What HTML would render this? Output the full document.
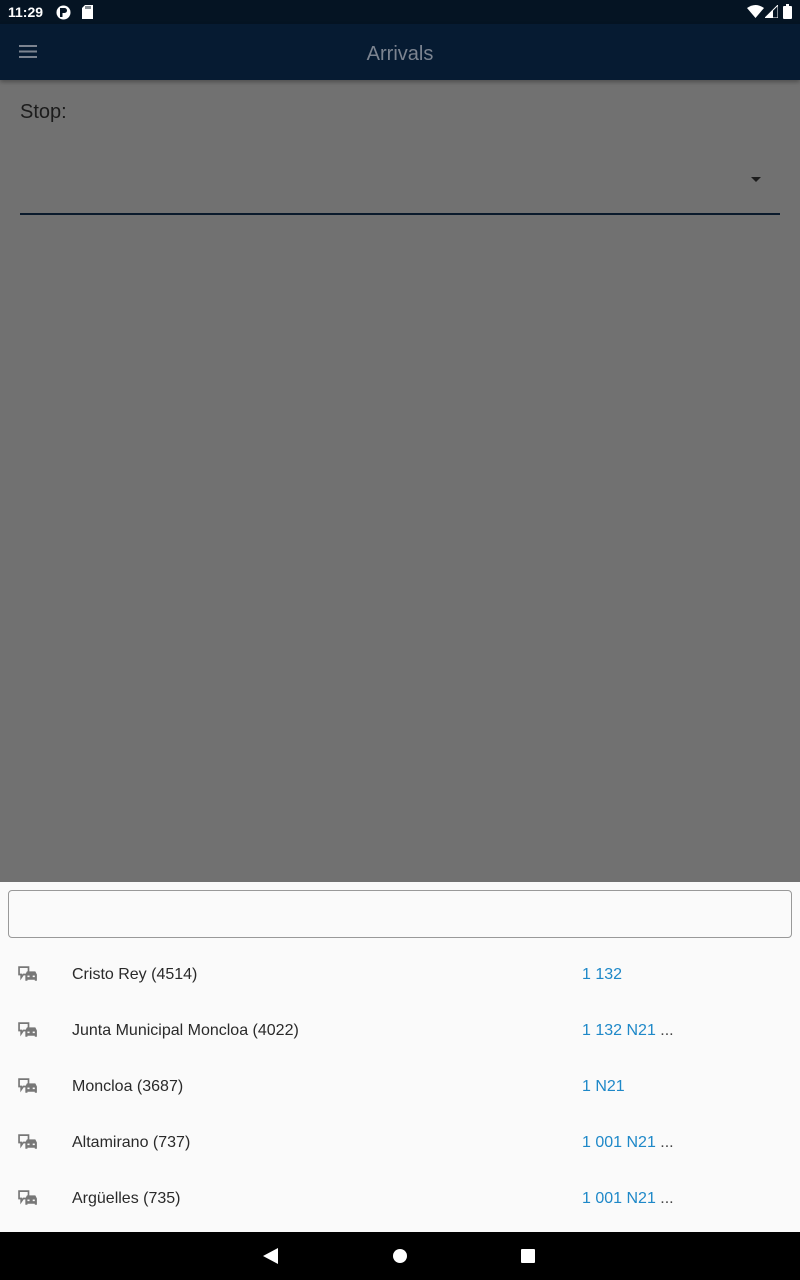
<!DOCTYPE html>
<html><head><meta charset="utf-8"><style>
*{margin:0;padding:0;box-sizing:border-box}
body{width:800px;height:1280px;overflow:hidden;background:#717171;font-family:"Liberation Sans",Roboto,sans-serif;position:relative}
.sb{position:absolute;top:0;left:0;width:800px;height:24px;background:#051423;color:#fff;font-size:14px}
.ab{position:absolute;top:24px;left:0;width:800px;height:56px;background:#061b32;box-shadow:0 2px 4px rgba(0,0,0,.3)}
.ab .t{position:absolute;left:0;right:0;top:19px;text-align:center;color:#7c8490;font-size:20px}
.stop{position:absolute;left:20px;top:101px;font-size:20px;color:#1c1c1c}
.line{position:absolute;left:20px;top:213px;width:760px;height:2px;background:#0a1a2c}
.sheet{position:absolute;left:0;top:882px;width:800px;height:350px;background:#fafafa}
.inp{position:absolute;left:8px;top:8px;width:784px;height:48px;border:1px solid #999;border-radius:4px}
.row{position:absolute;left:0;width:800px;height:56px;font-size:16px;color:#2a2a2a}
.row .n{position:absolute;left:72px;top:20px}
.row .l{position:absolute;left:582px;top:20px;color:#1e88c8}
.row .l span{color:#444}
.row svg{position:absolute;left:18px;top:20px;width:21px;height:17px}
.nav{position:absolute;left:0;top:1232px;width:800px;height:48px;background:#000}
</style></head><body>
<div class="sb">
<span style="position:absolute;left:8px;top:4px;font-weight:bold;font-size:14px">11:29</span>
<svg style="position:absolute;left:56px;top:5px" width="15" height="15" viewBox="0 0 15 15"><circle cx="7.5" cy="7.5" r="7" fill="#fff"/><rect x="4" y="3" width="2.5" height="9" fill="#051423"/><path d="M6.5 3h2a2.5 2.5 0 0 1 0 5h-2z" fill="#051423"/></svg>
<svg style="position:absolute;left:82px;top:5px" width="11" height="14" viewBox="0 0 11 14"><path d="M3 0h8v14H0V3z" fill="#fff"/><path d="M4 1v3M6 1v3M8 1v3" stroke="#051423" stroke-width="1"/></svg>
<svg style="position:absolute;left:747px;top:5px" width="17" height="13" viewBox="0 0 17 13"><path d="M0 3Q8.5-3 17 3L8.5 13z" fill="#fff"/></svg>
<svg style="position:absolute;left:765px;top:5px" width="13" height="13" viewBox="0 0 13 13"><path d="M13 0V13H0z" fill="none" stroke="#fff" stroke-width="1"/><path d="M8 5V13H0z" fill="#fff"/></svg>
<svg style="position:absolute;left:783px;top:4px" width="9" height="15" viewBox="0 0 9 15"><rect x="3" y="0" width="3" height="2" fill="#fff"/><rect x="0" y="2" width="9" height="13" rx="1" fill="#fff"/></svg>
</div>
<div class="ab">
<svg style="position:absolute;left:19px;top:21px" width="18" height="13" viewBox="0 0 18 13"><path d="M0 1h18M0 6.5h18M0 12h18" stroke="#7c8490" stroke-width="2"/></svg>
<div class="t">Arrivals</div>
</div>
<div class="stop">Stop:</div>
<svg style="position:absolute;left:751px;top:177px" width="10" height="5" viewBox="0 0 10 5"><path d="M0 0h10L5 5z" fill="#1c1c1c"/></svg>
<div class="line"></div>
<div class="sheet">
<div class="inp"></div>
</div>
<div class="nav">
<svg style="position:absolute;left:263px;top:16px" width="15" height="16" viewBox="0 0 15 16"><path d="M15 0V16L0 8z" fill="#fff"/></svg>
<svg style="position:absolute;left:393px;top:17px" width="14" height="14"><circle cx="7" cy="7" r="7" fill="#fff"/></svg>
<svg style="position:absolute;left:521px;top:17px" width="14" height="14"><rect width="14" height="14" rx="1" fill="#fff"/></svg>
</div>
<div class="row" style="top:946px"><svg viewBox="0 0 20 16"><path d="M1 1h9v7H5l-2 3V8H1z" fill="none" stroke="#777" stroke-width="1.6"/><path d="M7 8l1.5-3h8l1.5 3v6h-2v-1H9v1H7z" fill="#777"/><rect x="9" y="9" width="2" height="1.5" fill="#fafafa"/><rect x="14" y="9" width="2" height="1.5" fill="#fafafa"/></svg><span class="n">Cristo Rey (4514)</span><span class="l">1 132</span></div>
<div class="row" style="top:1002px"><svg viewBox="0 0 20 16"><path d="M1 1h9v7H5l-2 3V8H1z" fill="none" stroke="#777" stroke-width="1.6"/><path d="M7 8l1.5-3h8l1.5 3v6h-2v-1H9v1H7z" fill="#777"/><rect x="9" y="9" width="2" height="1.5" fill="#fafafa"/><rect x="14" y="9" width="2" height="1.5" fill="#fafafa"/></svg><span class="n">Junta Municipal Moncloa (4022)</span><span class="l">1 132 N21 <span>...</span></span></div>
<div class="row" style="top:1058px"><svg viewBox="0 0 20 16"><path d="M1 1h9v7H5l-2 3V8H1z" fill="none" stroke="#777" stroke-width="1.6"/><path d="M7 8l1.5-3h8l1.5 3v6h-2v-1H9v1H7z" fill="#777"/><rect x="9" y="9" width="2" height="1.5" fill="#fafafa"/><rect x="14" y="9" width="2" height="1.5" fill="#fafafa"/></svg><span class="n">Moncloa (3687)</span><span class="l">1 N21</span></div>
<div class="row" style="top:1114px"><svg viewBox="0 0 20 16"><path d="M1 1h9v7H5l-2 3V8H1z" fill="none" stroke="#777" stroke-width="1.6"/><path d="M7 8l1.5-3h8l1.5 3v6h-2v-1H9v1H7z" fill="#777"/><rect x="9" y="9" width="2" height="1.5" fill="#fafafa"/><rect x="14" y="9" width="2" height="1.5" fill="#fafafa"/></svg><span class="n">Altamirano (737)</span><span class="l">1 001 N21 <span>...</span></span></div>
<div class="row" style="top:1170px"><svg viewBox="0 0 20 16"><path d="M1 1h9v7H5l-2 3V8H1z" fill="none" stroke="#777" stroke-width="1.6"/><path d="M7 8l1.5-3h8l1.5 3v6h-2v-1H9v1H7z" fill="#777"/><rect x="9" y="9" width="2" height="1.5" fill="#fafafa"/><rect x="14" y="9" width="2" height="1.5" fill="#fafafa"/></svg><span class="n">Argüelles (735)</span><span class="l">1 001 N21 <span>...</span></span></div>
</body></html>
